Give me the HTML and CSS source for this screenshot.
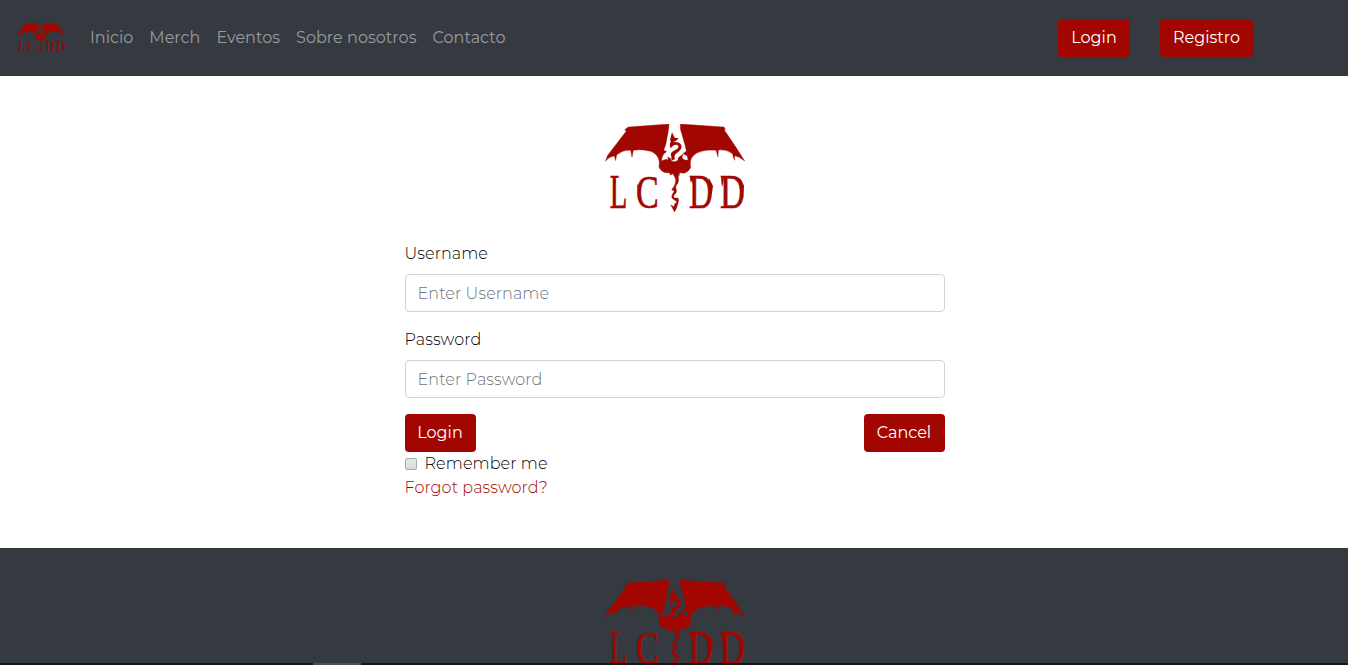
FILE: index.html
```html
<!DOCTYPE html>
<html lang="es">
<head>
<meta charset="utf-8">
<title>LCDD</title>
<link rel="stylesheet" href="styles.css">
</head>
<body>
<svg class="defs" aria-hidden="true">
  <symbol id="logo" viewBox="30 27 418 264">
    <g fill="#a20600">
      <path class="dragon" d="M221 27 L220 43 L211 90 L205 105 L214 110 L205 117 L200 128 L198 137 L213 133 L219 135 L217 126 L225 130 L229 139 L240 140 L248 135 L249 128 L263 117 L260 128 L266 134 L278 136 L276 123 L263 116 L273 108 L269 90 L255 42 L255 27 L386 36 L390 43 L387 45 L422 97 L448 138 Q433 125 418 122 L418 136 Q412 127 412 117 Q393 102 369 105 L368 126 L362 106 Q330 102 303 115 Q286 126 285 144 L286 158 Q280 170 267 175 L253 173 L251 184 L248 178 L250 194 Q250 205 243 211 Q239 216 243 224 Q246 232 237 239 Q232 243 237 249 L248 249 L250 256 L245 276 L238 291 L226 270 L235 275 L239 266 L245 260 L234 253 Q226 248 231 238 L237 229 L229 224 L236 214 Q242 204 241 193 L233 176 L225 180 L222 173 Q204 175 196 164 L191 157 L192 140 Q188 117 166 109 Q138 101 114 106 L110 127 L106 106 Q82 104 64 120 L61 137 L57 123 Q43 124 30 139 L37 121 L93 48 L88 44 L99 36 Z"/>
      <path d="M230 52 L238 68 L250 70 L242 77 L233 82 Q248 79 256 87 Q263 98 252 108 L241 117 Q235 123 239 132 L229 137 L228 125 Q223 112 236 107 Q252 100 249 93 Q245 86 233 92 L226 100 Q221 88 227 79 L224 76 Z"/>
      <g class="logo-letters">
        <text transform="translate(43 280) scale(.59 1)" font-size="146">L</text>
        <text transform="translate(122 279) scale(.72 1)" font-size="142">C</text>
        <text transform="translate(281 280) scale(.68 1)" font-size="146">D</text>
        <text transform="translate(374 280) scale(.71 1)" font-size="146">D</text>
      </g>
      <path d="M285 181 L289 187 L294 184 L292 207 L287 196 L284 203 Z M377 181 L380 188 L386 184 L384 202 L380 217 L378 199 Z M125 207 L134 216 L130 240 Z M53 187 L62 198 L55 219 Z M341 189 L353 213 L349 240 L341 219 Z M434 189 L446 212 L442 239 L433 220 Z"/>
    </g>
  </symbol>
</svg>
<div class="page">
  <header class="navbar">
    <a class="brand"><svg class="brand-logo"><use href="#logo"/></svg></a>
    <nav class="links">
      <a>Inicio</a>
      <a>Merch</a>
      <a>Eventos</a>
      <a>Sobre nosotros</a>
      <a>Contacto</a>
    </nav>
    <div class="actions">
      <button class="btn btn-login">Login</button>
      <button class="btn btn-registro">Registro</button>
    </div>
  </header>
  <main>
    <svg class="main-logo"><use href="#logo"/></svg>
    <form class="login-form">
      <label for="user">Username</label>
      <input class="field" id="user" type="text" placeholder="Enter Username">
      <label for="pass">Password</label>
      <input class="field" id="pass" type="password" placeholder="Enter Password">
      <div class="form-actions">
        <button type="button" class="btn btn-submit">Login</button>
        <button type="button" class="btn btn-cancel">Cancel</button>
      </div>
      <label class="remember"><input class="check" type="checkbox"><span>Remember me</span></label>
      <a class="forgot">Forgot password?</a>
    </form>
  </main>
  <footer class="footer"><svg class="main-logo"><use href="#logo"/></svg></footer>
  <div class="strip"><div class="strip-thumb"></div></div>
</div>
</body>
</html>
```
FILE: styles.css
```css
* { box-sizing: border-box; }
body {
  margin: 0;
  background: #fff;
  color: #000;
  font: 300 16px/24px Montserrat, Inter, sans-serif;
}
.defs { display: none; }
.page { height: 665px; display: flex; flex-direction: column; overflow: hidden; }
.navbar {
  height: 76px;
  flex: none;
  display: flex;
  align-items: center;
  background: #343a40;
  padding: 0 95px 0 17px;
}
.brand { display: flex; width: 65px; }
.brand-logo { width: 48px; height: 30px; }
.links { display: flex; font-weight: 400; color: #999c9f; letter-spacing: .03px; }
.links a { padding: 0 8px; white-space: nowrap; }
.actions { display: flex; gap: 30px; margin-left: auto; }
.btn {
  height: 38px;
  border: 0;
  border-radius: 4px;
  padding: 0;
  background: #a20600;
  color: #fff;
  font: inherit;
  font-weight: 400;
}
.btn-login { width: 72px; }
.btn-registro { width: 93px; }
main { height: 472px; flex: none; padding-top: 48px; display: flex; flex-direction: column; align-items: center; }
.main-logo { width: 140px; height: 88px; flex: none; margin-left: 1px; }
.login-form { width: 540px; margin: 30px 0 0 1px; display: flex; flex-direction: column; letter-spacing: .1px; }
.field {
  height: 38px;
  width: 100%;
  margin: 8px 0 16px;
  border: 1px solid #ced4da;
  border-radius: 4px;
  padding: 0 12px;
  background: #fff;
  font: inherit;
  letter-spacing: .1px;
}
.field::placeholder { color: #6c757d; opacity: 1; }
.form-actions { display: flex; justify-content: space-between; }
.btn-submit { width: 71px; }
.btn-cancel { width: 81px; }
.remember { display: flex; align-items: center; height: 24px; }
.check {
  appearance: none;
  width: 12px;
  height: 12px;
  margin: -1px 8px 0 0;
  border: 1px solid #aaa;
  border-radius: 2px;
  background: linear-gradient(#e8e8e8, #dadada);
}
.forgot { color: #a20600; }
.footer { height: 115px; flex: none; overflow: hidden; display: flex; justify-content: center; padding-top: 32px; background: #343a40; }
.strip { height: 2px; flex: none; background: #1b1719; padding-left: 313px; }
.strip-thumb { width: 48px; height: 2px; background: #504d50; }
.dragon { stroke: #a20600; stroke-width: 1px; }
.logo-letters { font-family: "Liberation Serif", serif; stroke: #a20600; stroke-width: 2px; }
```
